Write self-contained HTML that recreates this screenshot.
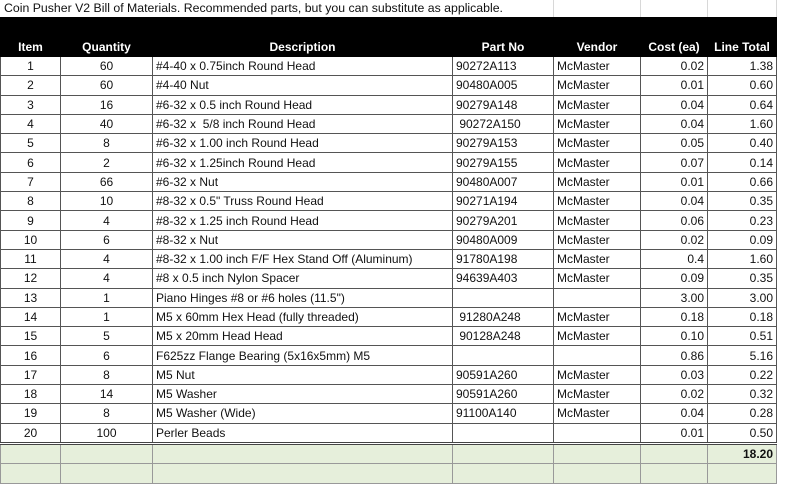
<!DOCTYPE html>
<html><head><meta charset="utf-8"><style>
body{margin:0;width:794px;height:473px;overflow:hidden;background:#fff;font-family:"Liberation Sans",Arial,sans-serif;font-size:12px;color:#111;position:relative}
.title{position:absolute;left:4px;top:1px;font-size:12.3px;white-space:nowrap}
.vg{position:absolute;top:0;height:18px;width:1px;background:#d8d8d8}
table{position:absolute;left:0;top:17px;border-collapse:collapse;table-layout:fixed}
td{border:1px solid #555;padding:0 3px;height:18.3px;line-height:18px;white-space:nowrap;overflow:hidden}
tr.h td{background:#000;color:#fff;font-weight:bold;height:37px;vertical-align:bottom;text-align:center;border-color:#000;line-height:16px;padding-bottom:1px}
.c{text-align:center}.r{text-align:right}
tr.g td{background:#e6efdb;border-color:#999}
tr.t td{border-top:3px double #444}
.ext{position:absolute;left:777px;width:17px;background:#fff}
</style></head><body>
<div class="title">Coin Pusher V2 Bill of Materials. Recommended parts, but you can substitute as applicable.</div>
<div class="vg" style="left:553px"></div><div class="vg" style="left:640px"></div><div class="vg" style="left:707px"></div><div class="vg" style="left:776px"></div>
<table>
<colgroup><col style="width:60px"><col style="width:92px"><col style="width:300px"><col style="width:101px"><col style="width:87px"><col style="width:67px"><col style="width:69px"></colgroup>
<tr class="h"><td>Item</td><td>Quantity</td><td>Description</td><td>Part No</td><td>Vendor</td><td>Cost (ea)</td><td>Line Total</td></tr>
<tr><td class="c">1</td><td class="c">60</td><td>#4-40 x 0.75inch Round Head</td><td>90272A113</td><td>McMaster</td><td class="r">0.02</td><td class="r">1.38</td></tr>
<tr><td class="c">2</td><td class="c">60</td><td>#4-40 Nut</td><td>90480A005</td><td>McMaster</td><td class="r">0.01</td><td class="r">0.60</td></tr>
<tr><td class="c">3</td><td class="c">16</td><td>#6-32 x 0.5 inch Round Head</td><td>90279A148</td><td>McMaster</td><td class="r">0.04</td><td class="r">0.64</td></tr>
<tr><td class="c">4</td><td class="c">40</td><td>#6-32 x&nbsp; 5/8 inch Round Head</td><td>&nbsp;90272A150</td><td>McMaster</td><td class="r">0.04</td><td class="r">1.60</td></tr>
<tr><td class="c">5</td><td class="c">8</td><td>#6-32 x 1.00 inch Round Head</td><td>90279A153</td><td>McMaster</td><td class="r">0.05</td><td class="r">0.40</td></tr>
<tr><td class="c">6</td><td class="c">2</td><td>#6-32 x 1.25inch Round Head</td><td>90279A155</td><td>McMaster</td><td class="r">0.07</td><td class="r">0.14</td></tr>
<tr><td class="c">7</td><td class="c">66</td><td>#6-32 x Nut</td><td>90480A007</td><td>McMaster</td><td class="r">0.01</td><td class="r">0.66</td></tr>
<tr><td class="c">8</td><td class="c">10</td><td>#8-32 x 0.5" Truss Round Head</td><td>90271A194</td><td>McMaster</td><td class="r">0.04</td><td class="r">0.35</td></tr>
<tr><td class="c">9</td><td class="c">4</td><td>#8-32 x 1.25 inch Round Head</td><td>90279A201</td><td>McMaster</td><td class="r">0.06</td><td class="r">0.23</td></tr>
<tr><td class="c">10</td><td class="c">6</td><td>#8-32 x Nut</td><td>90480A009</td><td>McMaster</td><td class="r">0.02</td><td class="r">0.09</td></tr>
<tr><td class="c">11</td><td class="c">4</td><td>#8-32 x 1.00 inch F/F Hex Stand Off (Aluminum)</td><td>91780A198</td><td>McMaster</td><td class="r">0.4</td><td class="r">1.60</td></tr>
<tr><td class="c">12</td><td class="c">4</td><td>#8 x 0.5 inch Nylon Spacer</td><td>94639A403</td><td>McMaster</td><td class="r">0.09</td><td class="r">0.35</td></tr>
<tr><td class="c">13</td><td class="c">1</td><td>Piano Hinges #8 or #6 holes (11.5")</td><td></td><td></td><td class="r">3.00</td><td class="r">3.00</td></tr>
<tr><td class="c">14</td><td class="c">1</td><td>M5 x 60mm Hex Head (fully threaded)</td><td>&nbsp;91280A248</td><td>McMaster</td><td class="r">0.18</td><td class="r">0.18</td></tr>
<tr><td class="c">15</td><td class="c">5</td><td>M5 x 20mm Head Head</td><td>&nbsp;90128A248</td><td>McMaster</td><td class="r">0.10</td><td class="r">0.51</td></tr>
<tr><td class="c">16</td><td class="c">6</td><td>F625zz Flange Bearing (5x16x5mm) M5</td><td></td><td></td><td class="r">0.86</td><td class="r">5.16</td></tr>
<tr><td class="c">17</td><td class="c">8</td><td>M5 Nut</td><td>90591A260</td><td>McMaster</td><td class="r">0.03</td><td class="r">0.22</td></tr>
<tr><td class="c">18</td><td class="c">14</td><td>M5 Washer</td><td>90591A260</td><td>McMaster</td><td class="r">0.02</td><td class="r">0.32</td></tr>
<tr><td class="c">19</td><td class="c">8</td><td>M5 Washer (Wide)</td><td>91100A140</td><td>McMaster</td><td class="r">0.04</td><td class="r">0.28</td></tr>
<tr><td class="c">20</td><td class="c">100</td><td>Perler Beads</td><td></td><td></td><td class="r">0.01</td><td class="r">0.50</td></tr>
<tr class="g t"><td></td><td></td><td></td><td></td><td></td><td></td><td class="r"><b>18.20</b></td></tr>
<tr class="g"><td></td><td></td><td></td><td></td><td></td><td></td><td></td></tr>
</table>
</body></html>
